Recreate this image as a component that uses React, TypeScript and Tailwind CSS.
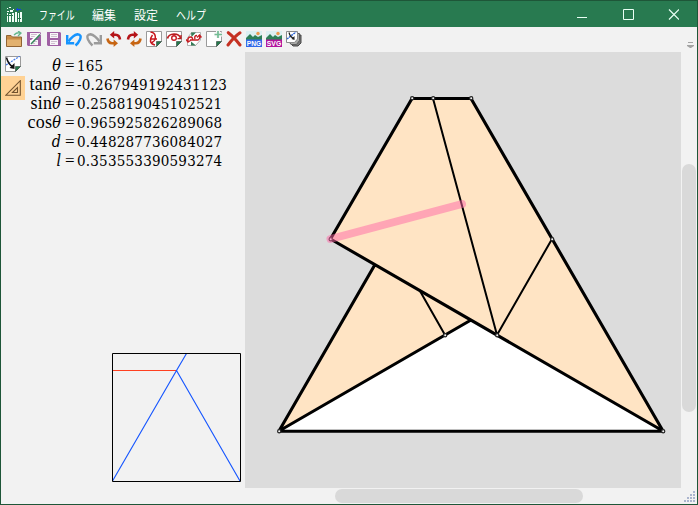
import type { ReactNode } from "react";

function Icon({ children }: { children: ReactNode }) {
  return (
    <svg className="h-4 w-4 shrink-0" viewBox="0 0 16 16" fill="none">
      {children}
    </svg>
  );
}

const Floppy = () => (
  <>
    <path d="M1 1H14L15 2V15H2L1 14Z" fill="#a060a4" />
    <path d="M4 2H12V7H4ZM4 9H12V14H4Z" fill="#f8f4f8" />
    <path d="M5 3.5H11M5 5.5H11M5 10.5H11M5 12.5H9" stroke="#cdbfce" />
  </>
);

const Page = () => (
  <>
    <path d="M.5 .5H15.5V10.5L10.5 15.5H.5Z" fill="#fff" stroke="#9a9a9a" />
    <path d="M10.5 10.5H15.5L10.5 15.5Z" fill="#247a4c" stroke="#31433a" strokeWidth=".6" />
  </>
);

function Mountains({ label, color }: { label: string; color: string }) {
  return (
    <Icon>
      <path d="M0 0H16V9H0Z" fill="#dceff2" />
      <circle cx="12" cy="2.5" r="1.7" fill="#ed9a4d" />
      <path d="M0 7L4 3L7 6L9 4L12 6L16 4V9H0Z" fill="#2e8057" />
      <path d="M0 8.5H16V16H0Z" fill={color} />
      <text x=".8" y="14.9" fontSize="7.5" fontWeight="700" textLength="14.4" lengthAdjust="spacingAndGlyphs" fill="#fff" className="font-['Liberation_Sans',sans-serif]">{label}</text>
    </Icon>
  );
}

function Rotate() {
  return (
    <>
      <path d="M7 3.8H9.5Q13.5 4 14 8.5" stroke="#b51418" strokeWidth="2.6" />
      <path d="M3.8 3.8L8.2 0V7.6Z" fill="#b51418" />
      <path d="M1.5 7.5Q2 12 6 12.2H8" stroke="#c76513" strokeWidth="2.6" />
      <path d="M12 12.2L7.6 8.4V16Z" fill="#c76513" />
    </>
  );
}

function Toolbar() {
  return (
    <div className="flex h-[25px] items-start gap-1 pt-1 pl-[5px]">
      <Icon>
        <path d="M.5 4.5H5L6.5 6H15.5V15.5H.5Z" fill="#c98b45" stroke="#916433" />
        <path d="M1 8.5H15V15H1Z" fill="#e2b16f" />
        <path d="M8 4Q11 1 14 2M12 0L15 2L12 5" stroke="#62b58b" strokeWidth="1.3" />
      </Icon>
      <Icon><Floppy /><path d="M5 13.5L6 10L14 2.5" stroke="#fff" strokeWidth="2.6" /><path d="M5 13L14 3.5" stroke="#37885d" strokeWidth="1.5" /></Icon>
      <Icon><Floppy /></Icon>
      <Icon><path d="M2.5 10.5Q7 4 11.5 3.2Q16 3.5 14 8.5Q12.5 12 9.5 14.5" stroke="#1594ff" strokeWidth="2.5" /><path d="M1.2 4V12.3H8.2" stroke="#1594ff" strokeWidth="2.4" /></Icon>
      <Icon><g transform="translate(16 0) scale(-1 1)"><path d="M2.5 10.5Q7 4 11.5 3.2Q16 3.5 14 8.5Q12.5 12 9.5 14.5" stroke="#9b9b9b" strokeWidth="2.4" /><path d="M1.2 4V12.3H8.2" stroke="#9b9b9b" strokeWidth="2.4" /></g></Icon>
      <Icon><Rotate /></Icon>
      <Icon><g transform="translate(16 0) scale(-1 1)"><Rotate /></g></Icon>
      <Icon><Page /><path d="M4.5 1.2H6Q9.8 2.5 9.3 7.5Q9 10 6 11.5M6.5 4Q4 7 4.5 10.5Q5.5 13.5 9 14M4.5 8H11" stroke="#c71920" strokeWidth="1.5" /></Icon>
      <Icon><Page /><path d="M1.5 7.5Q2.5 3.2 8 3Q13.5 3.2 14.5 7" stroke="#b91c20" strokeWidth="1.7" /><path d="M15 4V7.7H11.5" stroke="#b91c20" strokeWidth="1.3" /><circle cx="8" cy="7" r="2.3" stroke="#c71920" strokeWidth="1.4" /></Icon>
      <Icon>
        <path d="M5.5 1.5H14.5V9L9.5 14.5H1.5V7Z" fill="#fff" stroke="#a0a0a0" strokeWidth=".8" />
        <path d="M5 1.5H10L5.5 6Z M5 10.5L10 14.5H5Z" fill="#367b57" />
        <path d="M2 10.5Q1.5 6 4.5 6Q7 6 6.5 9.5M0 8.5L2 11L4.5 9.5M4 9H12Q14.5 8 13.5 4.5M11 6.5L13.5 4L15.5 6.5M9 8Q8 4.5 11 4.5" stroke="#c51d22" strokeWidth="1.4" />
      </Icon>
      <Icon><Page /><path d="M12 0V7M8.5 3.5H16" stroke="#f5f5f5" strokeWidth="4" /><path d="M12 0V7M8.5 3.5H16" stroke="#73bc94" strokeWidth="1.7" /></Icon>
      <Icon><path d="M2.3 1.7Q8 6 14 14M14 1.8Q8 6 2 14" stroke="#c53122" strokeWidth="3" strokeLinecap="round" /></Icon>
      <Mountains label="PNG" color="#3368e8" />
      <Mountains label="SVG" color="#b1159d" />
      <Icon>
        <path d="M4 4H15V12L12 15H7L4 12Z" fill="#777" stroke="#484848" />
        <path d="M2.5 2.5H13.5V9.5L10.5 13.5H5L2.5 10Z" fill="#a9aaa8" stroke="#5c5c5c" />
        <path d="M.5 .5H11.5V8L8.5 11.5H.5Z" fill="#fff" stroke="#8b8b8b" />
        <path d="M1 8L10 1" stroke="#3168d5" strokeWidth="1.5" strokeDasharray="2 .7" />
        <path d="M3 1.5Q4 6 8 7.5" stroke="#222" strokeWidth="1.2" /><path d="M8.5 5V9L5.5 8Z" fill="#222" />
      </Icon>
      <svg className="mt-[11px] mr-[3px] ml-auto h-[7px] w-[7px]" viewBox="0 0 7 7"><path d="M1 0H6V1H1ZM0 3H7V4L4 6H3L0 4Z" fill="#a3a3a3" /></svg>
    </div>
  );
}

function Header() {
  return (
    <header className="flex h-[26px] shrink-0 items-center bg-[#287a50] text-white">
      <svg className="ml-[6px] h-[15px] w-[15px]" viewBox="0 0 15 15" shapeRendering="crispEdges">
        <path d="M0 1H1V2H0ZM2 0H4V1H2ZM0 4H2V5H0ZM3 3H6V5H3ZM0 6H1V15H0ZM2 7H4V15H2ZM5 6H7V15H5ZM8 5H10V15H8ZM11 6H12V15H11ZM13 5H15V15H13ZM6 2H7V3H6Z" fill="#f3fff8" />
        <path d="M9 2H14V3H9ZM10 1H11V4H10Z" fill="#1641df" />
        <path d="M0 8H6V9H0ZM11 11H14V12H11Z" fill="#287a50" />
      </svg>
      <nav className="ml-[17px] flex h-full items-center pt-px font-['Noto_Sans_CJK_JP',sans-serif] text-[12px] whitespace-nowrap">
        <span className="w-[53px]"><span className="inline-block origin-left scale-x-[.74]">ファイル</span></span>
        <span className="w-[42px]">編集</span><span className="w-[42px]">設定</span>
        <span className="inline-block origin-left scale-x-[.83]">ヘルプ</span>
      </nav>
      <svg className="mt-[2px] mr-[18px] ml-auto h-3 w-[102px]" viewBox="0 0 102 12" fill="none" stroke="#e9fff4">
        <path d="M0 8.5H10" /><path d="M46.5 .5H56.5V10.5H46.5Z" /><path d="M92 .5L102 10.5M102 .5L92 10.5" strokeWidth="1.2" />
      </svg>
    </header>
  );
}

const values = [
  { fn: "", symbol: "θ", value: "165" },
  { fn: "tan", symbol: "θ", value: "-0.267949192431123" },
  { fn: "sin", symbol: "θ", value: "0.258819045102521" },
  { fn: "cos", symbol: "θ", value: "0.965925826289068" },
  { fn: "", symbol: "d", value: "0.448287736084027" },
  { fn: "", symbol: "l", value: "0.353553390593274" },
];

function LeftPanel() {
  return (
    <aside className="flex w-[244px] shrink-0 flex-col">
      <div className="flex h-[301px]">
        <div className="w-6 shrink-0">
          <div className="flex h-6 items-center justify-center">
            <Icon><Page /><path d="M1 9L15 0" stroke="#467ce9" strokeWidth="1.3" strokeDasharray="2 1" /><path d="M1.5 1.5Q3 8 8 11" stroke="#111" strokeWidth="1.5" /><path d="M9.5 7V13L4.5 12Z" fill="#111" /></Icon>
          </div>
          <div className="flex h-6 items-center justify-center bg-[#ffd294]">
            <svg className="h-4 w-4" viewBox="0 0 16 16" fill="none" stroke="#735430" strokeWidth="1.1"><path d="M.7 15.3L15.3 .7V15.3ZM7.5 12.5L12.5 7.5V12.5Z" /></svg>
          </div>
        </div>
        <div className="pt-[3px] text-[17px] leading-[19px] text-black">
          {values.map((v) => (
            <div className="flex h-[19px] items-baseline whitespace-nowrap" key={v.fn + v.symbol}>
              <span className="w-9 shrink-0 text-right">
                <span className="font-['Liberation_Serif',serif] text-[18px] tracking-[0.3px]">{v.fn}</span>
                <i className="font-['DejaVu_Serif_Condensed','DejaVu_Serif',serif] text-[16px]">{v.symbol}</i>
              </span>
              <span className="w-4 shrink-0 pl-1 font-['Liberation_Serif',serif] text-[17px]">=</span>
              <span className="font-['DejaVu_Serif_Condensed','DejaVu_Serif',serif] text-[15px] tracking-[0.22px]">{v.value}</span>
            </div>
          ))}
        </div>
      </div>
      <svg className="ml-[111px] h-[129px] w-[129px]" viewBox="0 0 129 129" fill="none">
        <path d="M1 17.5H64.5" stroke="#ff4020" />
        <path d="M.5 128L64.5 17.5L74.5 .5M64.5 17.5L128 128" stroke="#1656ff" strokeWidth="1.15" />
        <path d="M.5 .5H128.5V128.5H.5Z" stroke="#000" />
      </svg>
    </aside>
  );
}

const points = [[167, 46], [188, 46], [226, 46], [85.5, 187], [307, 187], [200, 283], [252, 283], [34, 379], [418, 379]];

function FoldDiagram() {
  return (
    <svg className="h-[436px] w-[436px] bg-[#dcdcdc]" viewBox="0 0 436 436" fill="none">
      <path d="M34 379L226 268L418 379Z" fill="#fff" />
      <path d="M34 379L130 212L226 268Z" fill="#ffe4c4" />
      <path d="M85.5 187L167 46.5H226L418 379Z" fill="#ffe4c4" />
      <g stroke="#000" strokeLinejoin="round">
        <path d="M34 379L130 212.5M34 379L226 268M34 379.2H418M418 379L85.5 187L167 46.5H226L418 379" strokeWidth="3.1" />
        <path d="M188 46.5L252 283L307 187M175 239L200 283" strokeWidth="2" />
      </g>
      {points.map(([x, y], i) => <circle key={i} cx={x + 0.2} cy={y + 0.2} r="1.6" fill="#f4f4f4" stroke="#222" strokeWidth="1.2" />)}
      <path d="M85.5 187L217 152" stroke="#ff65a5" strokeOpacity=".5" strokeWidth="8" strokeLinecap="round" />
    </svg>
  );
}

export default function App() {
  return (
    <main className="flex h-[505px] w-[698px] flex-col overflow-hidden border border-[#1e5638] bg-[#f2f2f2]">
      <Header />
      <Toolbar />
      <div className="flex h-[452px]">
        <LeftPanel />
        <div className="grid grid-cols-[436px_16px] grid-rows-[436px_16px]">
          <FoldDiagram />
          <div className="pt-[112px] pl-[1px]"><div className="h-[248px] w-[14px] rounded-full bg-[#d9d9d9]" /></div>
          <div className="pt-[1px] pl-[90px]"><div className="h-[14px] w-[248px] rounded-full bg-[#d9d9d9]" /></div>
          <svg className="h-4 w-4" viewBox="0 0 16 16" fill="#abb5ce"><path d="M12 3h2v2h-2zM9 6h2v2H9zM12 6h2v2h-2zM6 9h2v2H6zM9 9h2v2H9zM12 9h2v2h-2zM3 12h2v2H3zM6 12h2v2H6zM9 12h2v2H9zM12 12h2v2h-2z" /></svg>
        </div>
      </div>
    </main>
  );
}
